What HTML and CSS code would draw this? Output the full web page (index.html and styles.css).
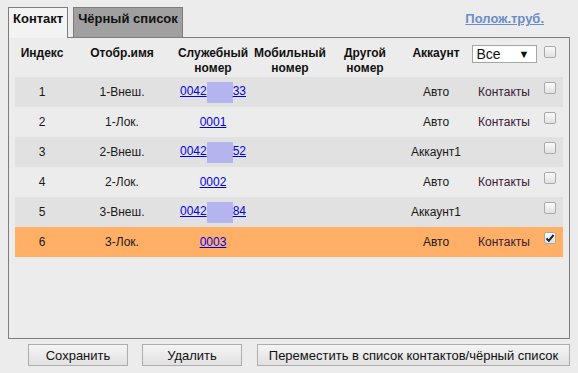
FILE: index.html
```html
<!DOCTYPE html>
<html lang="ru">
<head>
    <meta charset="UTF-8">
    <meta name="viewport" content="width=device-width, initial-scale=1.0">
    <title>Контакт</title>
    <link rel="stylesheet" href="styles.css">
</head>
<body>
    <div class="page">
        <div class="tabbar">
            <div class="tab active">Контакт</div>
            <div class="tab inactive">Чёрный список</div>
            <a class="pos-link" href="#">Полож.труб.</a>
        </div>

        <div class="panel">
            <table class="contacts">
                <colgroup>
                    <col class="c-idx">
                    <col class="c-name">
                    <col class="c-work">
                    <col class="c-mob">
                    <col class="c-other">
                    <col class="c-acc">
                    <col class="c-book">
                    <col class="c-chk">
                </colgroup>
                <thead>
                    <tr>
                        <th>Индекс</th>
                        <th>Отобр.имя</th>
                        <th>Служебный номер</th>
                        <th>Мобильный номер</th>
                        <th>Другой номер</th>
                        <th>Аккаунт</th>
                        <th><div class="select"><span>Все</span><span class="arrow">▼</span></div></th>
                        <th class="chk"><span class="cb"></span></th>
                    </tr>
                </thead>
                <tbody>
                    <tr class="odd">
                        <td>1</td>
                        <td>1-Внеш.</td>
                        <td><a href="#">0042<span class="mask"></span>33</a></td>
                        <td></td>
                        <td></td>
                        <td>Авто</td>
                        <td class="book">Контакты</td>
                        <td class="chk"><span class="cb"></span></td>
                    </tr>
                    <tr>
                        <td>2</td>
                        <td>1-Лок.</td>
                        <td><a href="#">0001</a></td>
                        <td></td>
                        <td></td>
                        <td>Авто</td>
                        <td class="book">Контакты</td>
                        <td class="chk"><span class="cb"></span></td>
                    </tr>
                    <tr class="odd">
                        <td>3</td>
                        <td>2-Внеш.</td>
                        <td><a href="#">0042<span class="mask"></span>52</a></td>
                        <td></td>
                        <td></td>
                        <td>Аккаунт1</td>
                        <td class="book"></td>
                        <td class="chk"><span class="cb"></span></td>
                    </tr>
                    <tr>
                        <td>4</td>
                        <td>2-Лок.</td>
                        <td><a href="#">0002</a></td>
                        <td></td>
                        <td></td>
                        <td>Авто</td>
                        <td class="book">Контакты</td>
                        <td class="chk"><span class="cb"></span></td>
                    </tr>
                    <tr class="odd">
                        <td>5</td>
                        <td>3-Внеш.</td>
                        <td><a href="#">0042<span class="mask"></span>84</a></td>
                        <td></td>
                        <td></td>
                        <td>Аккаунт1</td>
                        <td class="book"></td>
                        <td class="chk"><span class="cb"></span></td>
                    </tr>
                    <tr class="selected">
                        <td>6</td>
                        <td>3-Лок.</td>
                        <td><a href="#">0003</a></td>
                        <td></td>
                        <td></td>
                        <td>Авто</td>
                        <td class="book">Контакты</td>
                        <td class="chk">
                            <span class="cb checked">
                                <svg width="10" height="10" viewBox="0 0 10 10"><path d="M1.5 5.5 L3.8 7.8 L8.5 2" fill="none" stroke="#222" stroke-width="2"/></svg>
                            </span>
                        </td>
                    </tr>
                </tbody>
            </table>
        </div>

        <div class="actions">
            <button class="btn btn-save">Сохранить</button>
            <button class="btn btn-del">Удалить</button>
            <button class="btn btn-move">Переместить в список контактов/чёрный список</button>
        </div>
    </div>
</body>
</html>
```

FILE: styles.css
```css
body {
    margin: 0;
    background: #ececec;
    font-family: "Liberation Sans", Arial, sans-serif;
    font-size: 12px;
    color: #1a1a1a;
}

.page {
    width: 562px;
    padding: 7px 0 0 8px;
}

/* tabs */
.tabbar {
    display: flex;
    align-items: flex-start;
    height: 30px;
}

.tab {
    box-sizing: border-box;
    height: 30px;
    padding: 3px 4px 0;
    border: 1px solid #7d7d7d;
    border-bottom: none;
    font-size: 13px;
    font-weight: bold;
    line-height: 16px;
    color: #111;
}

.tab.active {
    position: relative;
    z-index: 1;
    height: 31px;
    background: #f3f3f3;
}

.tab.inactive {
    margin-left: 5px;
    background: #a0a0a0;
}

.pos-link {
    margin: 4px 26px 0 auto;
    font-size: 13px;
    font-weight: bold;
    color: #6b8cc8;
}

/* panel + table */
.panel {
    box-sizing: border-box;
    height: 302px;
    border: 1px solid #7d7d7d;
    padding: 0 6px;
}

.contacts {
    width: 548px;
    table-layout: fixed;
    border-collapse: collapse;
}

.c-idx { width: 54px; }
.c-name { width: 106px; }
.c-work { width: 76px; }
.c-mob { width: 78px; }
.c-other { width: 72px; }
.c-acc { width: 70px; }
.c-book { width: 66px; }
.c-chk { width: 26px; }

.contacts thead tr {
    height: 39px;
}

.contacts th {
    padding: 8px 0 0;
    vertical-align: top;
    text-align: center;
    font-weight: bold;
    line-height: 15px;
    color: #111;
}

.contacts tbody tr {
    height: 30px;
}

.contacts td {
    padding: 0;
    text-align: center;
    vertical-align: middle;
}

.contacts tr.odd {
    background: #e1e1e1;
}

.contacts tr.selected {
    background: #ffb066;
}

.contacts td.chk {
    vertical-align: top;
    padding-top: 5px;
}

.contacts a {
    color: #0000ee;
}

.contacts .book {
    color: #3a1a38;
}

.mask {
    display: inline-block;
    width: 26px;
    height: 21px;
    vertical-align: middle;
    background: #b4b4ee;
}

.select {
    box-sizing: border-box;
    display: flex;
    align-items: center;
    justify-content: space-between;
    width: 65px;
    height: 18px;
    margin: -1px auto 0;
    padding: 0 6px 0 4px;
    border: 1px solid #a6a6a6;
    background: #fff;
    font-size: 14px;
    font-weight: normal;
    color: #111;
}

.select .arrow {
    font-size: 11px;
}

.cb {
    box-sizing: border-box;
    display: block;
    width: 12px;
    height: 12px;
    margin: 0 auto;
    border: 1px solid #a9a9a9;
    border-radius: 2px;
    background: linear-gradient(#fbfbfb, #e2e2e2);
}

.cb svg {
    display: block;
}

/* buttons */
.actions {
    display: flex;
    gap: 14px;
    padding: 5px 0 0 20px;
}

.btn {
    height: 22px;
    padding: 0;
    border: 1px solid #adadad;
    background: linear-gradient(#f4f4f4, #e1e1e1);
    font-family: "Liberation Sans", Arial, sans-serif;
    font-size: 13px;
    color: #111;
}

.btn-save, .btn-del { width: 100px; }
.btn-move { width: 313px; margin-left: 1px; }
```
